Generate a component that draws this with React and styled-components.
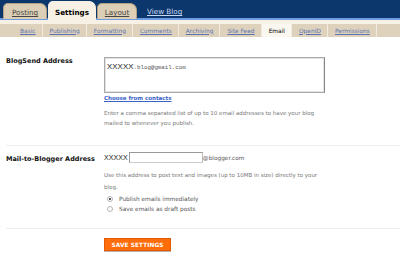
import React from 'react';
import styled, { createGlobalStyle } from 'styled-components';

const GlobalStyle = createGlobalStyle`
  html, body {
    margin: 0;
    padding: 0;
    background: #ffffff;
  }
  body {
    font-family: "DejaVu Sans", Verdana, sans-serif;
    width: 400px;
    height: 261px;
    overflow: hidden;
  }
`;

const mainTabs = [
  { label: 'Posting', width: 44 },
  { label: 'Settings', width: 48, active: true },
  { label: 'Layout', width: 40 },
];

const subTabs = ['Basic', 'Publishing', 'Formatting', 'Comments', 'Archiving', 'Site Feed', 'Email', 'OpenID', 'Permissions'];

const App = () => {
  return (
    <Page>
      <GlobalStyle />
      <TopBar>
        {mainTabs.map(tab => (
          <Tab key={tab.label} $active={tab.active} $width={tab.width}>
            {tab.label}
          </Tab>
        ))}
        <ViewBlog href="#">View Blog</ViewBlog>
      </TopBar>
      <CreamStrip />
      <SubNav>
        {subTabs.map(item => (
          <SubTab key={item} $active={item === 'Email'}>
            <span>{item}</span>
          </SubTab>
        ))}
      </SubNav>

      <Content>
        <Row>
          <Label $top={0}>BlogSend Address</Label>
          <Field>
            <AddressBox>
              <Masked>XXXXX</Masked>
              <Mono>.blog@gmail.com</Mono>
            </AddressBox>
            <ContactsLink href="#">Choose from contacts</ContactsLink>
            <Help>
              Enter a comma separated list of up to 10 email addresses to have your blog
              <br />
              mailed to whenever you publish.
            </Help>
          </Field>
        </Row>

        <Divider $above={17} $below={6} />

        <Row>
          <Label $top={3}>Mail-to-Blogger Address</Label>
          <Field>
            <InputLine>
              <Masked $small>XXXXX</Masked>
              <SecretInput />
              <Domain>@blogger.com</Domain>
            </InputLine>
            <Help $spaced>
              Use this address to post text and images (up to 10MB in size) directly to your
              <br />
              blog.
            </Help>
            <Options>
              <Option>
                <Radio type="radio" name="mode" defaultChecked />
                Publish emails immediately
              </Option>
              <Option>
                <Radio type="radio" name="mode" />
                Save emails as draft posts
              </Option>
            </Options>
          </Field>
        </Row>

        <Divider $above={16} $below={9} />

        <Row>
          <span />
          <SaveButton>SAVE SETTINGS</SaveButton>
        </Row>
      </Content>
    </Page>
  );
};

export default App;

const Page = styled.div`
  width: 400px;
  height: 261px;
  background: #fff;
`;

const TopBar = styled.div`
  height: 18px;
  background: #0c376c;
  border-bottom: 2px solid #6f9be3;
  display: flex;
  align-items: flex-end;
  gap: 1px;
  padding-left: 3px;
`;

const Tab = styled.div`
  box-sizing: border-box;
  width: ${p => p.$width}px;
  height: ${p => (p.$active ? 19 : 16)}px;
  margin-bottom: ${p => (p.$active ? -2 : -1)}px;
  background: ${p => (p.$active ? '#f7f0e4' : '#dccfb5')};
  border: 1px solid ${p => (p.$active ? '#f7f0e4' : '#b3a282')};
  border-bottom: none;
  border-radius: 5px 7px 0 0;
  display: flex;
  justify-content: center;
  padding-top: ${p => (p.$active ? 6 : 4)}px;
  font-size: 7.2px;
  font-weight: ${p => (p.$active ? 'bold' : 'normal')};
  color: ${p => (p.$active ? '#000' : '#444')};
  text-decoration: ${p => (p.$active ? 'none' : 'underline')};
`;

const ViewBlog = styled.a`
  margin-left: 9px;
  margin-bottom: 2px;
  font-size: 7.2px;
  color: #c9d8f2;
  text-decoration: underline;
`;

const CreamStrip = styled.div`
  height: 4px;
  background: #f7f0e4;
`;

const SubNav = styled.div`
  height: 13px;
  background: #ded2bd;
  display: flex;
  padding-left: 13px;
`;

const SubTab = styled.div`
  display: flex;
  align-items: center;
  padding: 0 6px 0 7px;
  border-right: 1px solid #f2ebdf;
  background: ${p => (p.$active ? '#faf7f1' : 'transparent')};
  font-size: 5.9px;
  color: ${p => (p.$active ? '#000' : '#5b73b0')};
  text-decoration: ${p => (p.$active ? 'none' : 'underline')};
`;

const Content = styled.div`
  padding: 20px 0 0 6px;
`;

const Row = styled.div`
  display: grid;
  grid-template-columns: 98px 1fr;
`;

const Label = styled.div`
  font-size: 6.5px;
  font-weight: bold;
  color: #111;
  padding-top: ${p => p.$top}px;
`;

const Field = styled.div`
  display: flex;
  flex-direction: column;
  align-items: flex-start;
`;

const AddressBox = styled.div`
  box-sizing: border-box;
  width: 221px;
  height: 36px;
  border: 1px solid #a9a9a9;
  border-right-color: #888;
  box-shadow: inset 0 0 0 1px #e2e2e2;
  padding: 4px 2px;
  display: flex;
  align-items: baseline;
`;

const Masked = styled.span`
  font-family: "Liberation Sans", Arial, sans-serif;
  font-size: ${p => (p.$small ? 7 : 7.8)}px;
  color: #222;
  letter-spacing: 0.1px;
`;

const Mono = styled.span`
  font-family: "Liberation Mono", "DejaVu Sans Mono", monospace;
  font-size: 5.8px;
  color: #555;
`;

const ContactsLink = styled.a`
  margin-top: 2px;
  font-size: 5.5px;
  font-weight: bold;
  color: #3a62c4;
  text-decoration: underline;
`;

const Help = styled.p`
  margin: ${p => (p.$spaced ? 6 : 7)}px 0 0;
  font-size: 5.5px;
  line-height: ${p => (p.$spaced ? 12 : 10)}px;
  color: #777;
`;

const Divider = styled.div`
  height: 1px;
  background: #eeeeee;
  margin: ${p => p.$above}px 0 ${p => p.$below}px;
`;

const InputLine = styled.div`
  display: flex;
  align-items: center;
`;

const SecretInput = styled.div`
  box-sizing: border-box;
  width: 74px;
  height: 11px;
  margin-left: 1px;
  border: 1px solid #999;
  border-right-color: #bbb;
  border-bottom-color: #ccc;
`;

const Domain = styled.span`
  font-size: 5.8px;
  color: #555;
`;

const Options = styled.div`
  display: flex;
  flex-direction: column;
  gap: 4px;
  margin-top: 3px;
`;

const Option = styled.label`
  display: flex;
  align-items: center;
  gap: 6px;
  padding-left: 3px;
  font-size: 5.8px;
  color: #555;
`;

const Radio = styled.input`
  appearance: none;
  margin: 0;
  width: 6px;
  height: 6px;
  border: 1px solid #b5b5b5;
  border-radius: 50%;
  background: #fff;
  box-sizing: border-box;
  position: relative;

  &:checked::after {
    content: '';
    position: absolute;
    inset: 1px;
    border-radius: 50%;
    background: #222;
  }
`;

const SaveButton = styled.button`
  width: 67px;
  height: 13px;
  padding: 0;
  background: #ff6c0a;
  border: 1px solid #e35a00;
  box-shadow: 0 1px 0 #b9b0a8;
  color: #fff;
  font-family: "DejaVu Sans", Verdana, sans-serif;
  font-size: 5.8px;
  font-weight: bold;
  letter-spacing: 0.1px;
`;
